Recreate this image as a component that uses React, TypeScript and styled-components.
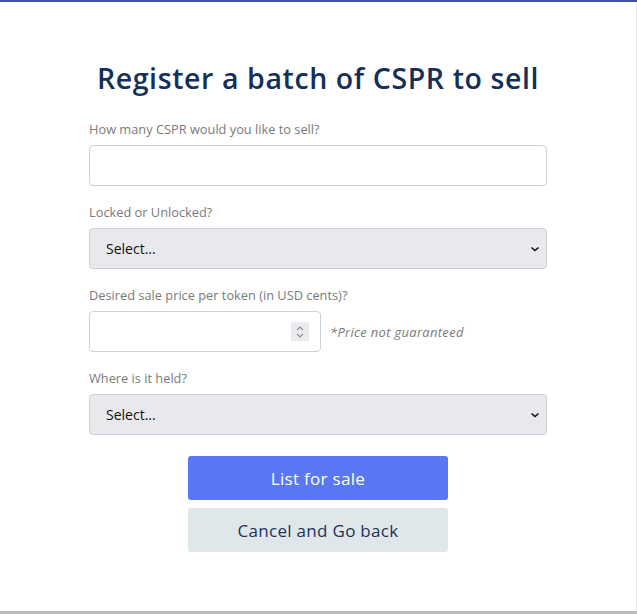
import React from "react";
import styled, { createGlobalStyle } from "styled-components";

const Global = createGlobalStyle`
  html, body { margin: 0; padding: 0; background: #fff; }
  body { font-family: "Open Sans", "Liberation Sans", sans-serif; }
  * { box-sizing: border-box; }
`;

const Card = styled.div`
  width: 637px;
  height: 614px;
  border-top: 2px solid #3d52a1;
  border-bottom: 3px solid #b4bcc2;
  box-shadow: inset -1px 0 0 #e3e6ea;
  display: flex;
  padding-left: 89px;
`;

const Column = styled.form`
  width: 458px;
  display: flex;
  flex-direction: column;
  padding-top: 56px;
`;

const Title = styled.h1`
  margin: 0 0 22px;
  font-family: "Open Sans", sans-serif;
  font-weight: 600;
  font-size: 28.5px;
  letter-spacing: 0.6px;
  line-height: 40px;
  color: #14305a;
  text-align: center;
  white-space: nowrap;
`;

const Field = styled.div`
  display: flex;
  flex-direction: column;
  margin-bottom: 17px;
`;

const Label = styled.label`
  font-size: 12.8px;
  line-height: 18px;
  color: #7a7a7a;
  margin-bottom: 7px;
`;

const TextInput = styled.input`
  height: 41px;
  width: 100%;
  border: 1px solid #c9d3db;
  border-radius: 4px;
  background: #fff;
  padding: 0 16px;
  font: inherit;
  font-size: 14px;
  &::-webkit-inner-spin-button,
  &::-webkit-outer-spin-button {
    -webkit-appearance: none;
    margin: 0;
  }
`;

const Select = styled.select`
  appearance: none;
  -webkit-appearance: none;
  height: 41px;
  width: 100%;
  border: 1px solid #c9d0d8;
  border-radius: 4px;
  background-color: #e8e8ed;
  background-image: url("data:image/svg+xml,%3Csvg xmlns='http://www.w3.org/2000/svg' width='10' height='6' viewBox='0 0 10 6'%3E%3Cpath d='M1.5 1.5 L5 4.5 L8.5 1.5' fill='none' stroke='%23111' stroke-width='1.6'/%3E%3C/svg%3E");
  background-repeat: no-repeat;
  background-position: right 6px center;
  padding: 0 16px;
  font-family: inherit;
  font-size: 14px;
  color: #111;
`;

const PriceRow = styled.div`
  display: flex;
  align-items: center;
  gap: 9px;
`;

const NumberWrap = styled.div`
  position: relative;
  width: 232px;
`;

const Spinner = styled.div`
  position: absolute;
  right: 12px;
  top: 11px;
  width: 18px;
  height: 19px;
  background: #ebebef;
  display: flex;
  align-items: center;
  justify-content: center;
`;

const Note = styled.span`
  font-size: 13px;
  letter-spacing: 0.3px;
  font-style: italic;
  color: #7a7a7a;
`;

const Buttons = styled.div`
  display: flex;
  flex-direction: column;
  align-items: center;
  gap: 8px;
  margin-top: 4px;
`;

const Button = styled.button<{ $primary?: boolean }>`
  width: 260px;
  height: 44px;
  border: none;
  border-radius: 3px;
  font-family: inherit;
  font-size: 17px;
  letter-spacing: 0.3px;
  background: ${(p) => (p.$primary ? "#5977f2" : "#e0e7ea")};
  color: ${(p) => (p.$primary ? "#ffffff" : "#1b3256")};
`;

export default function App() {
  return (
    <>
      <Global />
      <Card>
        <Column>
          <Title>Register a batch of CSPR to sell</Title>
          <Field>
            <Label>How many CSPR would you like to sell?</Label>
            <TextInput type="text" />
          </Field>
          <Field>
            <Label>Locked or Unlocked?</Label>
            <Select defaultValue="">
              <option value="">Select...</option>
              <option value="locked">Locked</option>
              <option value="unlocked">Unlocked</option>
            </Select>
          </Field>
          <Field>
            <Label>Desired sale price per token (in USD cents)?</Label>
            <PriceRow>
              <NumberWrap>
                <TextInput type="number" />
                <Spinner>
                  <svg width="10" height="14" viewBox="0 0 10 14">
                    <path d="M2 5 L5 2 L8 5 M2 9 L5 12 L8 9" fill="none" stroke="#8a8a90" strokeWidth="1.2" />
                  </svg>
                </Spinner>
              </NumberWrap>
              <Note>*Price not guaranteed</Note>
            </PriceRow>
          </Field>
          <Field>
            <Label>Where is it held?</Label>
            <Select defaultValue="">
              <option value="">Select...</option>
              <option value="exchange">Exchange</option>
              <option value="wallet">Wallet</option>
            </Select>
          </Field>
          <Buttons>
            <Button type="button" $primary>List for sale</Button>
            <Button type="button">Cancel and Go back</Button>
          </Buttons>
        </Column>
      </Card>
    </>
  );
}
